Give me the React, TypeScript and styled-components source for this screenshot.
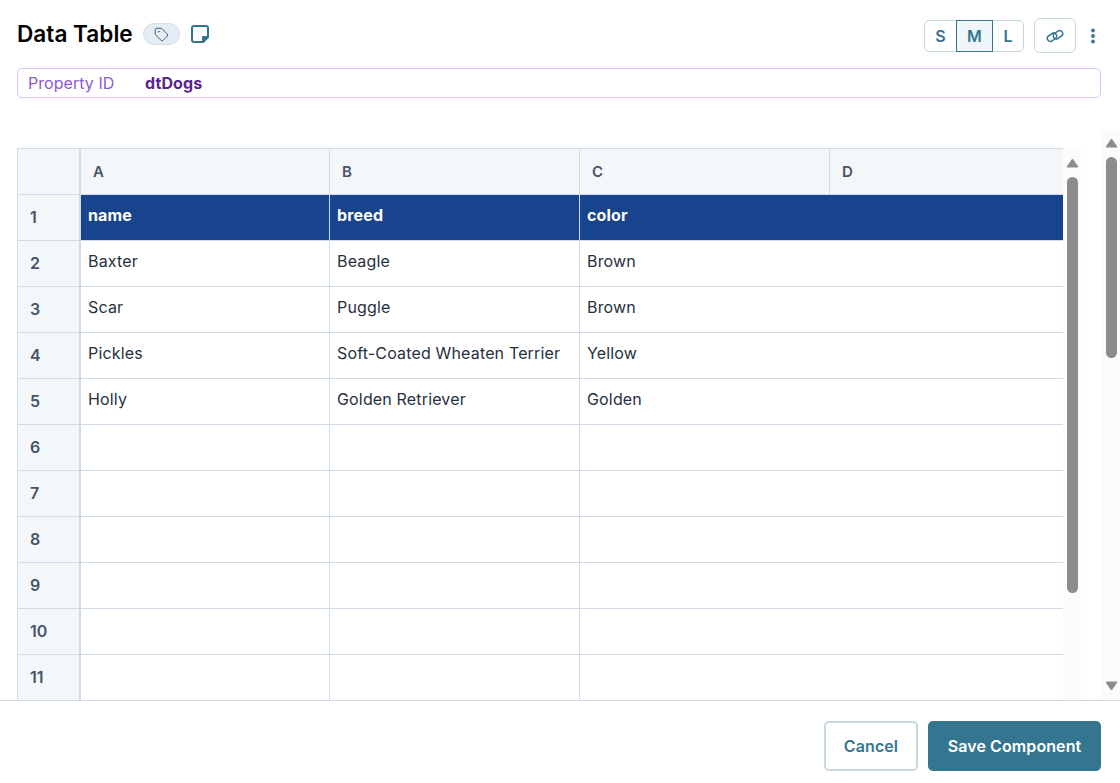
import React from "react"
import styled, { createGlobalStyle } from "styled-components"
import { Tag } from "lucide-react"

const GlobalStyle = createGlobalStyle`
  html, body {
    margin: 0;
    height: 100%;
    overflow: hidden;
    background: #fff;
    font-family: Inter, "Liberation Sans", sans-serif;
  }
  * { box-sizing: border-box; }
`

const Page = styled.div`
  width: 1120px;
  height: 783px;
  display: flex;
  flex-direction: column;
  overflow: hidden;
`

const Top = styled.div`
  height: 130px;
  flex: none;
  padding: 18px 19px 0 17px;
`

const HeaderRow = styled.div`
  display: flex;
  align-items: center;
  height: 35px;
`

const TitleGroup = styled.div`
  display: flex;
  align-items: center;
  margin-bottom: 3px;
`

const Title = styled.h1`
  margin: 0;
  font-size: 22.6px;
  line-height: 32px;
  font-weight: 600;
  color: #000;
`

const TagPill = styled.span`
  display: flex;
  align-items: center;
  justify-content: center;
  width: 37px;
  height: 22px;
  margin-left: 10px;
  border-radius: 11px;
  background: #e6ecf3;
  border: 1px solid #d5dee8;
  color: #3f5f86;
`

const NoteIcon = styled.svg`
  width: 20px;
  height: 20px;
  margin-left: 10px;
  color: #34768f;
`

const HeaderActions = styled.div`
  margin-left: auto;
  display: flex;
  align-items: center;
`

const SizeGroup = styled.div`
  display: flex;
  height: 32px;
  border: 1px solid #c6d9e3;
  border-radius: 5px;
`

const SizeButton = styled.button<{ $active?: boolean; $w: number }>`
  width: ${(p) => p.$w}px;
  margin: -1px 0;
  padding: 0;
  font: 600 16px Inter, sans-serif;
  color: #34768f;
  background: ${(p) => (p.$active ? "#eff6fa" : "transparent")};
  border: ${(p) => (p.$active ? "1px solid #34768f" : "none")};
`

const LinkButton = styled.button`
  width: 42px;
  height: 35px;
  margin-left: 10px;
  padding: 0;
  display: flex;
  align-items: center;
  justify-content: center;
  background: #fff;
  border: 1px solid #c6d9e3;
  border-radius: 6px;
  color: #34768f;
`

const DotsIcon = styled.svg`
  width: 6px;
  height: 16px;
  margin-left: 14px;
  margin-right: 5px;
  color: #34768f;
`

const PropertyBar = styled.div`
  display: flex;
  align-items: center;
  height: 30px;
  margin-top: 15px;
  padding-left: 10px;
  border: 1px solid #e0c3f5;
  border-radius: 5px;
  font-size: 16px;
`

const PropertyLabel = styled.span`
  width: 117px;
  letter-spacing: 0.05px;
  color: #8e5bd0;
`

const PropertyValue = styled.span`
  font-weight: 700;
  letter-spacing: 0.1px;
  color: #5b2391;
`

const ScrollArea = styled.div`
  flex: 1;
  min-height: 0;
  display: flex;
  overflow: hidden;
`

const Content = styled.div`
  flex: 1;
  min-width: 0;
  display: flex;
  padding: 18px 21px 0 17px;
`

const Sheet = styled.div`
  flex: 1;
  min-width: 0;
  display: grid;
  grid-template-columns: 64px 249px 250px 250px 233px;
  grid-template-rows: 47px;
  grid-auto-rows: 46px;
  align-content: start;
  overflow: hidden;
`

const Corner = styled.div`
  background: #f4f7fa;
  border: 1px solid #cfdbe6;
  border-right-width: 2px;
`

const ColumnHead = styled.div<{ $last?: boolean }>`
  display: flex;
  align-items: center;
  padding-left: 12px;
  font-size: 15px;
  font-weight: 600;
  color: #475467;
  background: #f4f7fa;
  border-top: 1px solid #cfdbe6;
  border-bottom: 1px solid #cfdbe6;
  border-right: ${(p) => (p.$last ? "none" : "1px solid #cfdbe6")};
`

const RowHead = styled.div`
  display: flex;
  align-items: center;
  padding: 0 0 2px 12px;
  font-size: 16px;
  font-weight: 600;
  color: #475467;
  background: #f4f7fa;
  border-left: 1px solid #cfdbe6;
  border-right: 2px solid #cfdbe6;
  border-bottom: 1px solid #cfdbe6;
`

const Cell = styled.div<{ $head?: boolean; $open?: boolean }>`
  display: flex;
  align-items: center;
  padding: 0 0 6px 7px;
  font-size: 16px;
  letter-spacing: 0.16px;
  font-weight: ${(p) => (p.$head ? 700 : 400)};
  color: ${(p) => (p.$head ? "#fff" : "#27303f")};
  background: ${(p) => (p.$head ? "#17448c" : "#fff")};
  border-bottom: 1px solid #cfdbe6;
  border-right: ${(p) => (p.$open ? "none" : "1px solid #cfdbe6")};
  white-space: nowrap;
`

const Track = styled.div`
  flex: none;
  width: 18px;
  display: flex;
  flex-direction: column;
  align-items: center;
  background: #fbfbfb;
`

const Arrow = styled.svg<{ $mt: number }>`
  flex: none;
  width: 13px;
  height: 10px;
  margin-top: ${(p) => p.$mt}px;
  fill: #8c8c8c;
  stroke: #8c8c8c;
  stroke-width: 1;
  stroke-linejoin: round;
`

const Thumb = styled.div<{ $h: number }>`
  flex: none;
  width: 11px;
  height: ${(p) => p.$h}px;
  margin-top: 9px;
  border-radius: 6px;
  background: #8c8c8c;
`

const Footer = styled.footer`
  flex: none;
  height: 83px;
  display: flex;
  justify-content: flex-end;
  gap: 10px;
  padding: 20px 19px 0 0;
  border-top: 1px solid #cfdbe6;
`

const CancelButton = styled.button`
  width: 94px;
  height: 50px;
  padding: 0;
  font: 600 16px Inter, sans-serif;
  letter-spacing: 0.1px;
  color: #34768f;
  background: #fff;
  border: 2px solid #c6d9e3;
  border-radius: 5px;
`

const SaveButton = styled.button`
  width: 173px;
  height: 50px;
  padding: 0;
  font: 600 16px Inter, sans-serif;
  letter-spacing: 0.1px;
  color: #fff;
  background: #34768f;
  border: none;
  border-radius: 5px;
`

const columns = ["A", "B", "C", "D"]
const rows = [
  ["name", "breed", "color", ""],
  ["Baxter", "Beagle", "Brown", ""],
  ["Scar", "Puggle", "Brown", ""],
  ["Pickles", "Soft-Coated Wheaten Terrier", "Yellow", ""],
  ["Holly", "Golden Retriever", "Golden", ""],
  ["", "", "", ""],
  ["", "", "", ""],
  ["", "", "", ""],
  ["", "", "", ""],
  ["", "", "", ""],
  ["", "", "", ""],
]

const App: React.FC = () => {
  return (
    <Page>
      <GlobalStyle />
      <Top>
        <HeaderRow>
          <TitleGroup>
            <Title>Data Table</Title>
            <TagPill>
              <Tag size={15} strokeWidth={1.6} />
            </TagPill>
            <NoteIcon viewBox="0 0 20 20" fill="none" stroke="currentColor" strokeWidth="2">
              <path d="M4 2 H16 A2 2 0 0 1 18 4 V13 L13 18 H4 A2 2 0 0 1 2 16 V4 A2 2 0 0 1 4 2 Z" strokeLinejoin="round" />
              <path d="M13 18 V13 H18 Z" fill="currentColor" strokeLinejoin="round" />
            </NoteIcon>
          </TitleGroup>
          <HeaderActions>
            <SizeGroup>
              <SizeButton $w={31}>S</SizeButton>
              <SizeButton $w={37} $active>
                M
              </SizeButton>
              <SizeButton $w={30}>L</SizeButton>
            </SizeGroup>
            <LinkButton aria-label="Link">
              <svg width="18" height="16" viewBox="0 0 18 16" fill="none" stroke="currentColor" strokeWidth="1.5">
                <rect x="1" y="6.2" width="10" height="6" rx="3" transform="rotate(-35 6 9.2)" />
                <rect x="7" y="3.8" width="10" height="6" rx="3" transform="rotate(-35 12 6.8)" />
              </svg>
            </LinkButton>
            <DotsIcon viewBox="0 0 6 16" fill="currentColor">
              <circle cx="3" cy="2.5" r="1.9" />
              <circle cx="3" cy="8" r="1.9" />
              <circle cx="3" cy="13.5" r="1.9" />
            </DotsIcon>
          </HeaderActions>
        </HeaderRow>
        <PropertyBar>
          <PropertyLabel>Property ID</PropertyLabel>
          <PropertyValue>dtDogs</PropertyValue>
        </PropertyBar>
      </Top>

      <ScrollArea>
        <Content>
          <Sheet>
            <Corner />
            {columns.map((c, i) => (
              <ColumnHead key={c} $last={i === columns.length - 1}>
                {c}
              </ColumnHead>
            ))}
            {rows.map((row, r) => (
              <React.Fragment key={r}>
                <RowHead>{r + 1}</RowHead>
                {row.map((value, c) => (
                  <Cell key={c} $head={r === 0} $open={c >= 2}>
                    {value}
                  </Cell>
                ))}
              </React.Fragment>
            ))}
          </Sheet>
          <Track>
            <Arrow $mt={10} viewBox="0 0 13 10">
              <path d="M6.5 1 L12 9 H1 Z" />
            </Arrow>
            <Thumb $h={416} />
          </Track>
        </Content>
        <Track>
          <Arrow $mt={8} viewBox="0 0 13 10">
            <path d="M6.5 1 L12 9 H1 Z" />
          </Arrow>
          <Thumb $h={201} />
          <Arrow $mt={323} viewBox="0 0 13 10">
            <path d="M6.5 9 L12 1 H1 Z" />
          </Arrow>
        </Track>
      </ScrollArea>

      <Footer>
        <CancelButton>Cancel</CancelButton>
        <SaveButton>Save Component</SaveButton>
      </Footer>
    </Page>
  )
}

export default App
